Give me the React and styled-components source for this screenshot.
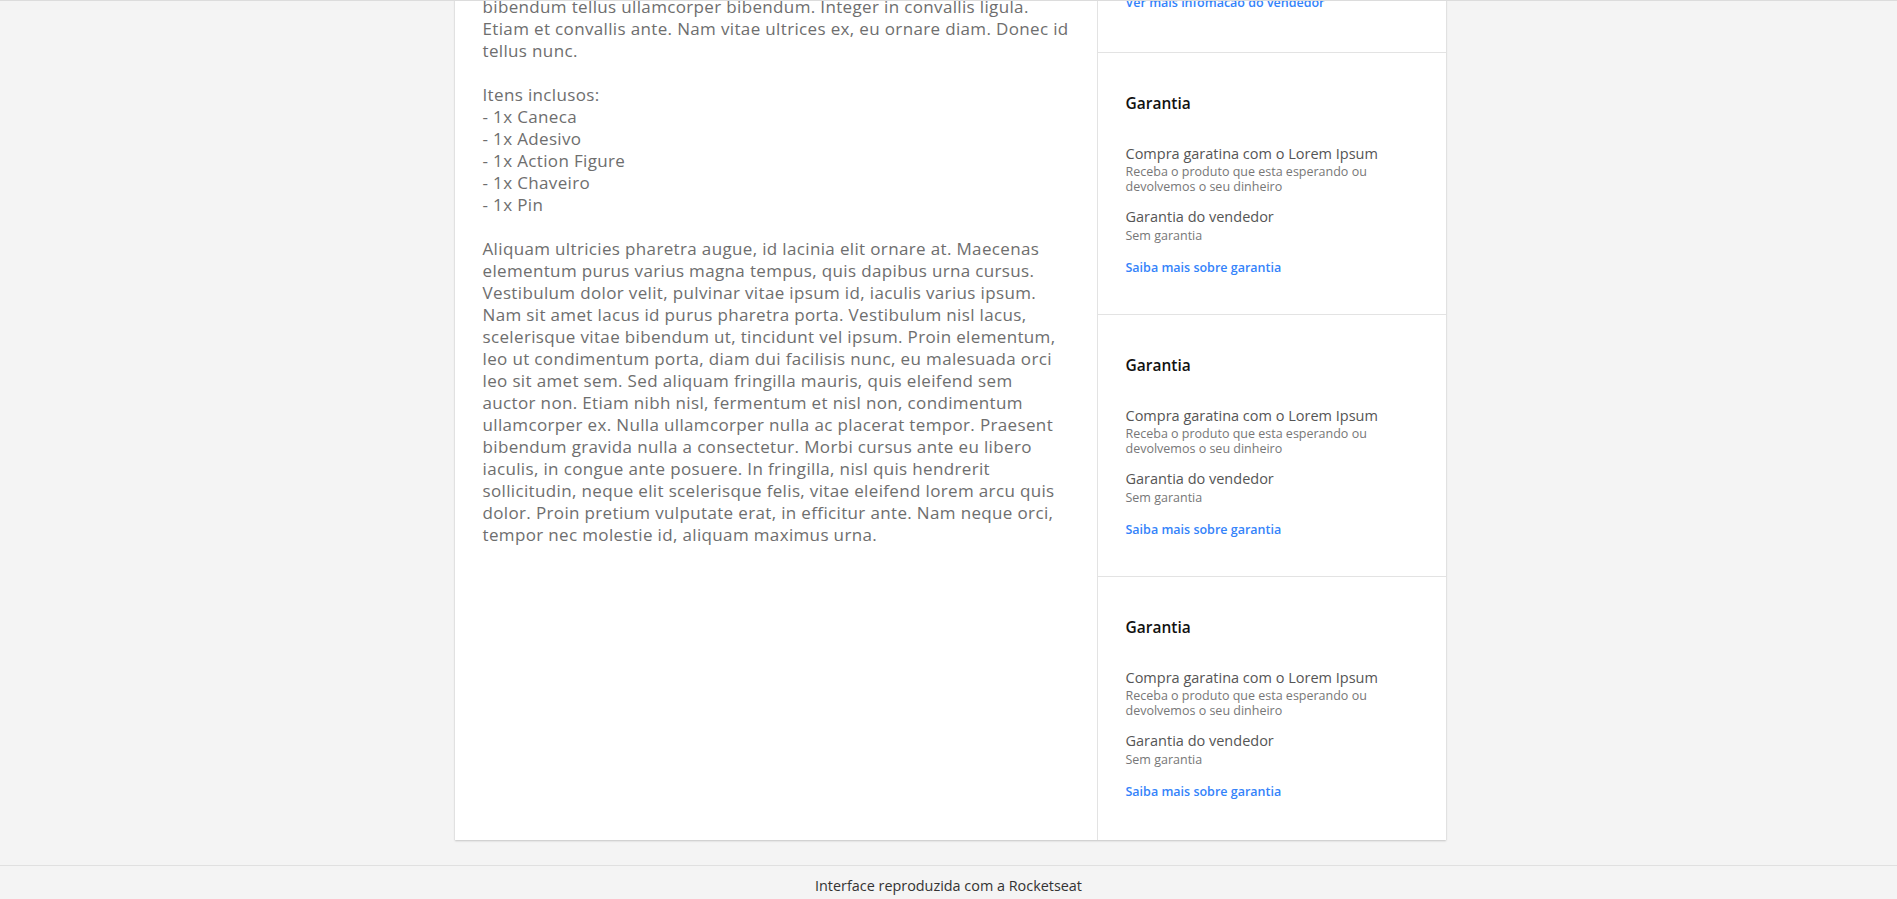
import React from "react";
import styled, { createGlobalStyle } from "styled-components";

const GlobalStyle = createGlobalStyle`
  html, body {
    margin: 0;
    padding: 0;
    background: #f4f4f4;
    font-family: "Open Sans", "Noto Sans", Arial, sans-serif;
  }
  * { box-sizing: border-box; }
`;

const Page = styled.div`
  min-height: 100vh;
  display: flex;
  flex-direction: column;
  background: #f4f4f4;
`;

const Viewport = styled.main`
  border-top: 1px solid #dcdcdc;
  overflow: hidden;
  padding-left: 3px;
`;

const Card = styled.section`
  width: 991px;
  margin: -41px auto 25px;
  display: grid;
  grid-template-columns: 643px 1fr;
  background: #fff;
  box-shadow: 0 1px 2px rgba(0, 0, 0, 0.18), 0 0 1px rgba(0, 0, 0, 0.12);
`;

const Description = styled.div`
  padding: 36px 27px 36px 28px;
  border-right: 1px solid #e3e3e3;
  color: #6e6e6e;
  font-size: 17px;
  letter-spacing: 0.35px;
  line-height: 22px;
  font-weight: 400;
`;

const Paragraph = styled.p`
  margin: 0 0 22px;
  white-space: pre;
`;

const Aside = styled.aside`
  display: flex;
  flex-direction: column;
`;

const Section = styled.div`
  padding: ${(p) =>
    p.$partial ? "36px 28px 42px" : p.$last ? "40px 28px 41px" : "40px 28px 39px"};
  border-bottom: ${(p) => (p.$last ? "none" : "1px solid #e3e3e3")};
  display: flex;
  flex-direction: column;
  align-items: flex-start;
`;

const Title = styled.h3`
  margin: 0 0 32px;
  font-size: 15.5px;
  line-height: 20px;
  font-weight: 600;
  color: #111;
`;

const Item = styled.div`
  display: flex;
  flex-direction: column;
  margin-bottom: ${(p) => p.$gap || 0}px;
`;

const Label = styled.span`
  font-size: 14.5px;
  line-height: 18px;
  color: #555;
`;

const Sub = styled.span`
  font-size: 12.5px;
  line-height: ${(p) => p.$lh || 13}px;
  margin-top: ${(p) => p.$mt || 2}px;
  color: #777;
`;

const Link = styled.a`
  font-size: 12.5px;
  line-height: 14px;
  font-weight: 600;
  color: #3483fa;
  text-decoration: none;
  cursor: pointer;
`;

const Footer = styled.footer`
  border-top: 1px solid #e0e0e0;
  background: #f4f4f4;
  padding: 12px 0 20px;
  text-align: center;
  font-size: 14.4px;
  line-height: 16px;
  color: #333;
`;

const paragraphs = [
  `bibendum tellus ullamcorper bibendum. Integer in convallis ligula.
Etiam et convallis ante. Nam vitae ultrices ex, eu ornare diam. Donec id
tellus nunc.`,
  `Itens inclusos:
- 1x Caneca
- 1x Adesivo
- 1x Action Figure
- 1x Chaveiro
- 1x Pin`,
  `Aliquam ultricies pharetra augue, id lacinia elit ornare at. Maecenas
elementum purus varius magna tempus, quis dapibus urna cursus.
Vestibulum dolor velit, pulvinar vitae ipsum id, iaculis varius ipsum.
Nam sit amet lacus id purus pharetra porta. Vestibulum nisl lacus,
scelerisque vitae bibendum ut, tincidunt vel ipsum. Proin elementum,
leo ut condimentum porta, diam dui facilisis nunc, eu malesuada orci
leo sit amet sem. Sed aliquam fringilla mauris, quis eleifend sem
auctor non. Etiam nibh nisl, fermentum et nisl non, condimentum
ullamcorper ex. Nulla ullamcorper nulla ac placerat tempor. Praesent
bibendum gravida nulla a consectetur. Morbi cursus ante eu libero
iaculis, in congue ante posuere. In fringilla, nisl quis hendrerit
sollicitudin, neque elit scelerisque felis, vitae eleifend lorem arcu quis
dolor. Proin pretium vulputate erat, in efficitur ante. Nam neque orci,
tempor nec molestie id, aliquam maximus urna.`,
];

function Warranty({ last }) {
  return (
    <Section $last={last}>
      <Title>Garantia</Title>
      <Item $gap={15}>
        <Label>Compra garatina com o Lorem Ipsum</Label>
        <Sub>Receba o produto que esta esperando ou</Sub>
        <Sub $mt={0}>devolvemos o seu dinheiro</Sub>
      </Item>
      <Item $gap={18}>
        <Label>Garantia do vendedor</Label>
        <Sub $lh={14} $mt={3}>Sem garantia</Sub>
      </Item>
      <Link>Saiba mais sobre garantia</Link>
    </Section>
  );
}

export default function App() {
  return (
    <Page>
      <GlobalStyle />
      <Viewport>
        <Card>
          <Description>
            {paragraphs.map((t, i) => (
              <Paragraph key={i}>{t}</Paragraph>
            ))}
          </Description>
          <Aside>
            <Section $partial>
              <Link>Ver mais infomacao do vendedor</Link>
            </Section>
            <Warranty />
            <Warranty />
            <Warranty last />
          </Aside>
        </Card>
      </Viewport>
      <Footer>Interface reproduzida com a Rocketseat</Footer>
    </Page>
  );
}
